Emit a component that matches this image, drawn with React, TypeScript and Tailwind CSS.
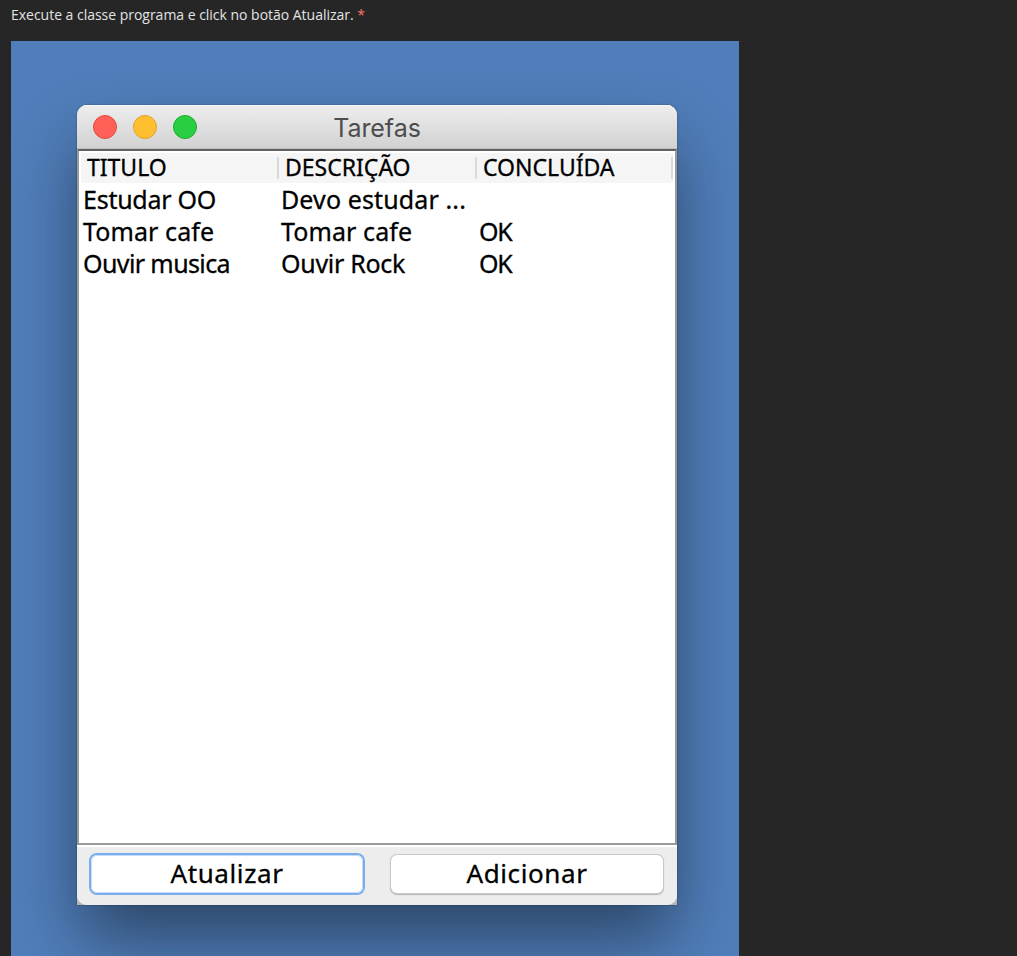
const columns = [
  { label: "TITULO", style: "w-[198px]" },
  { label: "DESCRIÇÃO", style: "w-[198px]" },
  { label: "CONCLUÍDA", style: "w-[196px]" },
];

const tasks = [
  [
    { text: "Estudar OO", style: "w-[198px] tracking-[-0.25px]" },
    { text: "Devo estudar ...", style: "w-[198px] tracking-[0.12px]" },
    { text: "", style: "w-[196px]" },
  ],
  [
    { text: "Tomar cafe", style: "w-[198px] tracking-[0.1px]" },
    { text: "Tomar cafe", style: "w-[198px] tracking-[0.1px]" },
    { text: "OK", style: "w-[196px] tracking-[-1.2px]" },
  ],
  [
    { text: "Ouvir musica", style: "w-[198px] tracking-[-0.6px]" },
    { text: "Ouvir Rock", style: "w-[198px] tracking-[-0.3px]" },
    { text: "OK", style: "w-[196px] tracking-[-1.2px]" },
  ],
];

function TitleBar() {
  return (
    <header className="grid h-11 shrink-0 grid-cols-[1fr_auto_1fr] items-center bg-linear-to-b from-[#eeeeee] to-[#d1d1d1] shadow-[inset_0_1px_0_#f6f6f6,inset_0_-1px_0_#bdbdbd]">
      <div className="flex gap-4 pl-4">
        <span className="size-6 rounded-full border border-[#e24b41] bg-[#ff6159]" />
        <span className="size-6 rounded-full border border-[#e1a12a] bg-[#ffbf2f]" />
        <span className="size-6 rounded-full border border-[#1dad2b] bg-[#29ce42]" />
      </div>
      <h1 className="pt-[2px] font-['Inter',sans-serif] text-[25px] leading-8 tracking-[-0.05px] text-[#4d4d4d] [-webkit-text-stroke:0]">Tarefas</h1>
    </header>
  );
}

function TaskTable() {
  return (
    <div className="h-[696px] shrink-0 border-2 border-x-[#9a9a9a] border-t-[#626262] border-b-[#9a9a9a] bg-white">
      <div className="mx-[2px] mt-[2px] flex h-[30px] bg-[#f5f5f5] text-[23px]">
        {columns.map((column) => (
          <div key={column.label} className={`flex justify-between py-1 pl-[6px] ${column.style}`}>
            <span className="-mt-px leading-[22px]">{column.label}</span>
            <span className="h-[22px] w-[2px] bg-[#dadada]" />
          </div>
        ))}
      </div>
      <div className="ml-[4px]">
        {tasks.map((row, index) => (
          <div key={index} className="flex h-8 text-[25px] leading-8">
            {row.map((cell, position) => (
              <span key={position} className={`whitespace-nowrap ${cell.style}`}>
                {cell.text}
              </span>
            ))}
          </div>
        ))}
      </div>
    </div>
  );
}

export default function App() {
  return (
    <main className="h-[956px] overflow-hidden bg-[#262626] pl-[11px] font-['Noto_Sans',sans-serif]">
      <p className="h-[41px] pt-[5px] font-['Open_Sans',sans-serif] text-[14px] leading-5 tracking-[-0.02px] text-[#e3e3e3]">
        Execute a classe programa e click no botão Atualizar. <span className="text-[#ff7468]">*</span>
      </p>
      <section className="h-[915px] w-[728px] overflow-hidden bg-[#507eba] pt-16 pl-[66px]">
        <div className="h-[800px] w-[600px] rounded-t-[10px] bg-[#b5b5b5] shadow-[0_0_2px_rgba(0,0,0,0.4),0_36px_68px_-4px_rgba(0,0,0,0.46)]">
          <div className="flex h-full flex-col overflow-hidden rounded-[10px] bg-[#eeeeee] text-black [-webkit-text-stroke:0.3px_currentColor]">
            <TitleBar />
            <TaskTable />
            <footer className="flex grow gap-[28px] border-t-2 border-white bg-[#ededed] pt-[8px] pl-[14px] text-[26px]">
              <button className="h-[38px] w-[272px] rounded-[6px] bg-white pb-[2px] leading-[36px] shadow-[0_0_0_2px_#79adeb,inset_0_0_0_1px_#c5dcf8]">
                <span className="tracking-[0.6px]">Atualizar</span>
              </button>
              <button className="h-[38px] w-[272px] rounded-[6px] bg-white pb-[2px] leading-[36px] shadow-[0_0_0_1px_#c8c8c8,0_1px_1px_1px_#b5b5b5]">
                <span className="tracking-[0.6px]">Adicionar</span>
              </button>
            </footer>
          </div>
        </div>
      </section>
    </main>
  );
}
